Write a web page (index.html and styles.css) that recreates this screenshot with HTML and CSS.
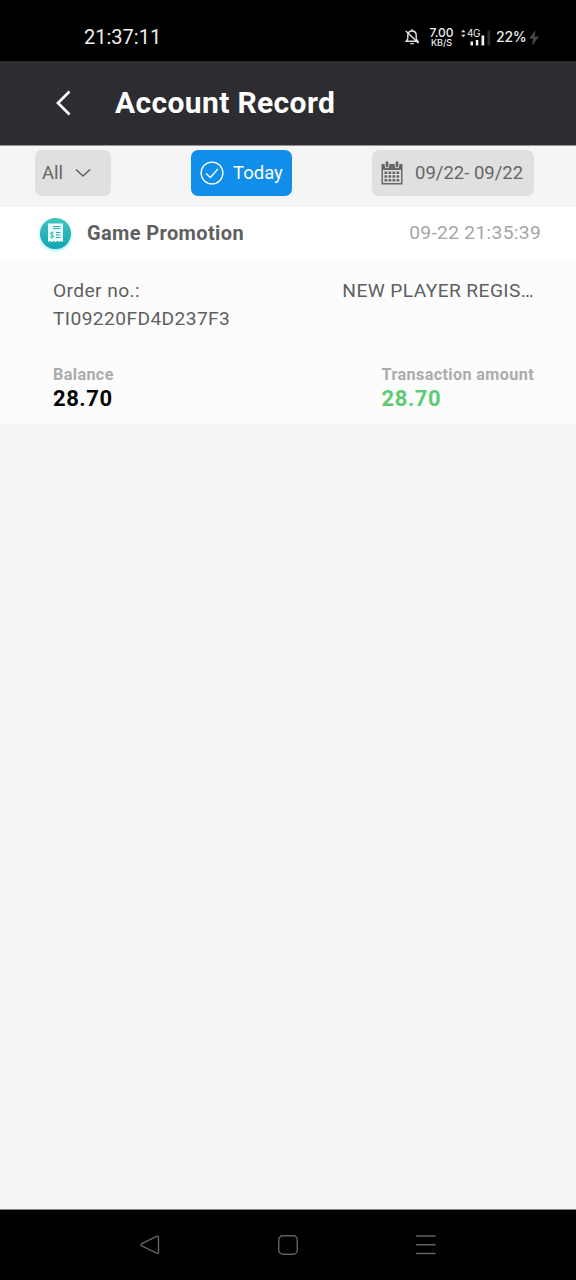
FILE: index.html
```html
<!DOCTYPE html>
<html lang="en">
<head>
<meta charset="utf-8">
<title>Account Record</title>
<link rel="stylesheet" href="styles.css">
</head>
<body>
<div class="screen">
  <div class="status">
    <span class="clock">21:37:11</span>
    <div class="indicators">
      <svg class="bell" width="16" height="18" viewBox="0 0 16 18" fill="none" stroke="#e4e4e4" stroke-width="1.4">
        <path d="M2.2 13.2H13.8L12.2 10.8V7.2C12.2 4.6 10.400 3 8 3S3.800 4.600 3.800 7.200V10.800Z"/>
        <path d="M8 1.200V3M6.300 15.600H9.700M1.800 3L14.600 15.200"/>
      </svg>
      <div class="speed"><span>7.00</span><span class="unit">KB/S</span></div>
      <div class="signal">
        <svg width="32" height="20" viewBox="0 0 32 20">
          <path d="M1 5.300L3.300 2.800L5.600 5.300ZM1 7.700L3.300 10.200L5.600 7.700Z" fill="#ddd"/>
          <path d="M10.500 14.500H13V18.500H10.500ZM15.800 13H18.300V18.500H15.800ZM21.500 8.500H24.200V18.500H21.500Z" fill="#f2f2f2"/>
          <path d="M27.500 3.500H30.200V18.500H27.500Z" fill="#2e2e2e"/>
        </svg>
        <span class="network">4G</span>
      </div>
      <span class="percent">22%</span>
      <svg class="bolt" width="12" height="18" viewBox="0 0 12 18"><path d="M7.500 1L1 9.800H5L4 17L11 7.500H6.800Z" fill="#444"/></svg>
    </div>
  </div>
  <header class="header">
    <svg class="back" width="18" height="28" viewBox="0 0 18 28" fill="none" stroke="#fff" stroke-width="2.700"><path d="M16.500 2.500L5 14L16.500 25.500"/></svg>
    <h1 class="title">Account Record</h1>
  </header>
  <div class="filters">
    <div class="chip type"><span>All</span>
      <svg width="16" height="10" viewBox="0 0 16 10" fill="none" stroke="#606060" stroke-width="1.600"><path d="M1 1.500L8 8L15 1.500"/></svg>
    </div>
    <div class="chip today">
      <svg width="24" height="24" viewBox="0 0 24 24" fill="none" stroke="#fff" stroke-width="1.300"><circle cx="12" cy="12" r="10.900"/><path d="M6 12.500L10.400 16.500L17.800 8"/></svg>
      <span>Today</span>
    </div>
    <div class="chip range">
      <svg width="22" height="24" viewBox="0 0 22 24">
        <path fill="#666" fill-rule="evenodd" d="M.5 3H21.500V23.500H.5ZM2 9V22H20V9Z"/>
        <path d="M6 1.500V5M16 1.500V5" stroke="#e0e0e0" stroke-width="4.600" stroke-linecap="round"/>
        <path d="M6 1.700V5M16 1.700V5" stroke="#666" stroke-width="2.800" stroke-linecap="round"/>
        <path d="M3.500 11.800H19M3.500 15.500H19M3.500 19.200H19" stroke="#666" stroke-width="2.600" stroke-dasharray="2.700 1.300"/>
      </svg>
      <span>09/22- 09/22</span>
    </div>
  </div>
  <section class="record">
    <div class="record-head">
      <svg width="40" height="42" viewBox="0 0 40 42">
        <defs>
          <linearGradient id="teal" x1="0" y1="0" x2="0" y2="1"><stop offset="0" stop-color="#42c6bd"/><stop offset="1" stop-color="#13a3b5"/></linearGradient>
          <filter id="glow" x="-30%" y="-30%" width="160%" height="160%"><feGaussianBlur stdDeviation="1.600"/></filter>
        </defs>
        <circle cx="20.500" cy="22" r="15.500" fill="#8ff0f5" filter="url(#glow)"/>
        <circle cx="20.500" cy="20.500" r="15.500" fill="url(#teal)"/>
        <path fill="#e9fffd" d="M13 10.500H28V29L26.100 28L24.200 29L22.400 28L20.500 29L18.600 28L16.800 29L14.900 28L13 29Z"/>
        <path d="M18 13.500H25.500M18 15.500H25.500M21 19.500H25.500M21 22H25.500M21 24.500H25.500" stroke="#2cadb6"/>
        <path d="M18.600 20.300C17.800 19 15.300 19.300 15.500 20.800C15.700 22.200 18.700 21.800 18.700 23.300C18.700 24.800 16 24.900 15.200 23.600M17.100 18.500V25.500" fill="none" stroke="#2cadb6" stroke-width=".9"/>
      </svg>
      <span class="name">Game Promotion</span>
      <span class="time">09-22 21:35:39</span>
    </div>
    <div class="record-body">
      <div class="details">
        <div class="order">Order no.:<br><span class="number">TI09220FD4D237F3</span></div>
        <div class="promo">NEW PLAYER REGIS…</div>
      </div>
      <div class="amounts">
        <div><div class="label">Balance</div><div class="value">28.70</div></div>
        <div class="transaction"><div class="label">Transaction amount</div><div class="value gain">28.70</div></div>
      </div>
    </div>
  </section>
  <main class="rest"></main>
  <nav class="nav">
    <svg width="22" height="22" viewBox="0 0 22 22"><path d="M18 2.200L2.800 9.700Q1.200 10.800 2.800 11.900L18 19.300Q19.500 19.800 19.500 18V3.500Q19.500 1.700 18 2.200Z"/></svg>
    <svg width="22" height="22" viewBox="0 0 22 22"><rect x="1.800" y="1.800" width="18.400" height="18.400" rx="4"/></svg>
    <svg width="22" height="22" viewBox="0 0 22 22"><path d="M1 2H20.500M1 10.700H20.500M1 19.500H20.500"/></svg>
  </nav>
</div>
</body>
</html>
```
FILE: styles.css
```css
* { box-sizing: border-box; }
body { margin: 0; background: #f5f5f5; font-family: Roboto, sans-serif; color: #5f5f5f; }
svg { display: block; flex: none; }
.screen { width: 576px; height: 1280px; display: flex; flex-direction: column; white-space: nowrap; overflow: hidden; }
.status { height: 61px; flex: none; background: #000; color: #eee; display: flex; justify-content: space-between; padding: 0 36px 0 84px; }
.clock { font-size: 20px; line-height: 24px; padding-top: 25px; }
.indicators { display: flex; padding-top: 27px; font-family: Inter, sans-serif; }
.bell { margin-top: 1px; margin-right: 8px; }
.speed { display: flex; flex-direction: column; width: 27px; align-items: center; font-size: 12px; line-height: 11px; font-weight: 500; }
.unit { font-size: 9px; line-height: 9px; }
.signal { position: relative; margin-left: 5px; width: 36px; }
.network { position: absolute; left: 7px; top: 0; font-size: 10px; line-height: 12px; letter-spacing: -.5px; color: #eee; }
.percent { font-size: 14px; line-height: 20px; font-weight: 500; width: 32px; letter-spacing: -.2px; }
.bolt { margin-top: 2px; }
.header { height: 85px; flex: none; background: #2d2c31; border-bottom: 1px solid #969193; display: flex; align-items: center; padding-left: 53px; }
.back { margin-right: 44px; }
.title { margin: 0; color: #fff; font-size: 30px; letter-spacing: .36px; line-height: 36px; font-weight: 700; }
.filters { height: 61px; flex: none; display: flex; justify-content: space-between; padding: 4px 42px 0 35px; }
.chip { height: 46px; border-radius: 7px; background: #e0e0e0; display: flex; align-items: center; font-size: 18.5px; color: #666; }
.chip span { line-height: 24px; padding-bottom: 1px; }
.type { width: 76px; padding-left: 7px; gap: 12px; }
.today { width: 101px; padding-left: 9px; gap: 9px; background: #118eea; color: #fff; }
.range { width: 162px; padding-left: 9px; gap: 12px; }
.record { flex: none; }
.record-head { height: 53px; display: flex; align-items: center; background: #fff; padding: 0 35px 0 35px; }
.name { margin-left: 12px; font-size: 20px; letter-spacing: .37px; line-height: 24px; padding-bottom: 1px; font-weight: 700; }
.time { margin-left: auto; font-size: 19.2px; letter-spacing: .33px; line-height: 24px; color: #a5a5a5; padding-bottom: 2px; }
.record-body { height: 164px; background: #fcfcfc; padding: 17px 42px 0 53px; }
.details { height: 87px; display: flex; justify-content: space-between; font-size: 19.2px; letter-spacing: .4px; line-height: 28px; }
.amounts { display: flex; justify-content: space-between; }
.label { font-size: 16.2px; letter-spacing: .37px; line-height: 21px; font-weight: 700; color: #ababab; }
.value { color: #050505; font-size: 22px; letter-spacing: .55px; line-height: 27px; font-weight: 700; }
.value.gain { color: #60ca73; }
.rest { flex: 1; }
.nav { height: 71px; flex: none; display: flex; justify-content: center; gap: 116px; align-items: center; background: #000; border-top: 1px solid #858585; }
.nav svg { fill: none; stroke: #626262; stroke-width: 1.4; }
```
